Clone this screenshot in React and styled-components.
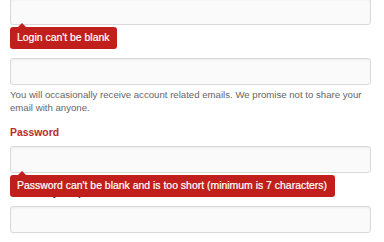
import React from "react";
import styled, { createGlobalStyle } from "styled-components";

const Global = createGlobalStyle`
  html, body { margin: 0; padding: 0; background: #ffffff; }
  body { font-family: "Liberation Sans", Arial, Helvetica, sans-serif; overflow: hidden; }
  * { box-sizing: border-box; }
`;

const Form = styled.form`
  margin: -21.7px 0 0 10px;
  width: 361px;
`;

const Group = styled.div`
  margin-bottom: 12.3px;
`;

const Label = styled.label`
  display: block;
  font-size: 10.4px;
  line-height: 14px;
  font-weight: bold;
  margin-bottom: 6px;
  color: ${(p) => (p.$error ? "#bd2b24" : "#333333")};
`;

const InputWrap = styled.div`
  position: relative;
`;

const Input = styled.input`
  display: block;
  width: 100%;
  height: 27px;
  margin: 0;
  padding: 0 6px;
  border: 1px solid #dadada;
  border-radius: 3px;
  background: #fafafa;
  box-shadow: inset 0 1px 2px rgba(0, 0, 0, 0.06);
  font: inherit;
  outline: none;
`;

const Tooltip = styled.div`
  position: absolute;
  z-index: 2;
  top: calc(100% + 2px);
  left: -0.5px;
  white-space: nowrap;
  background: #c11f1c;
  color: #ffffff;
  font-size: 10.45px;
  line-height: 14px;
  padding: 3.5px 7.5px 4.5px;
  border-radius: 3px;
  -webkit-text-stroke: 0.2px #ffffff;

  &::before {
    content: "";
    position: absolute;
    top: -4.6px;
    left: 8.5px;
    border-style: solid;
    border-width: 0 4.5px 4.6px 4.5px;
    border-color: transparent transparent #c11f1c transparent;
  }
`;

const Hint = styled.p`
  margin: 4.5px 0 0;
  font-size: 9.65px;
  line-height: 12.5px;
  color: #666666;
`;

export default function App() {
  return (
    <>
      <Global />
      <Form onSubmit={(e) => e.preventDefault()}>
        <Group>
          <Label $error>Username</Label>
          <InputWrap>
            <Input type="text" />
            <Tooltip>Login can't be blank</Tooltip>
          </InputWrap>
        </Group>
        <Group>
          <Label>Email Address</Label>
          <InputWrap>
            <Input type="text" />
          </InputWrap>
          <Hint>
            You will occasionally receive account related emails. We promise not to share your
            email with anyone.
          </Hint>
        </Group>
        <Group>
          <Label $error>Password</Label>
          <InputWrap>
            <Input type="password" />
            <Tooltip>Password can't be blank and is too short (minimum is 7 characters)</Tooltip>
          </InputWrap>
        </Group>
        <Group>
          <Label>Confirm your password</Label>
          <InputWrap>
            <Input type="password" />
          </InputWrap>
        </Group>
      </Form>
    </>
  );
}
